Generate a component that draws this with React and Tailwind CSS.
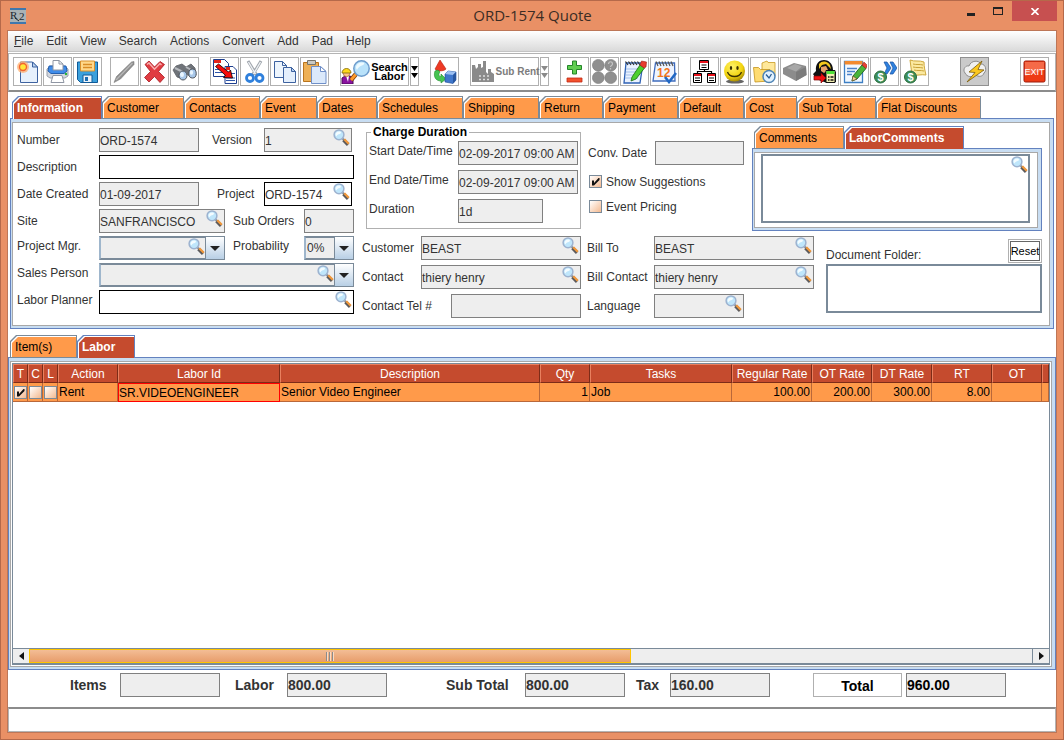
import React, { useState } from "react";
import clsx from "clsx";

/* ---------- Icons ---------- */

const Glass = ({ className }) => (
  <svg viewBox="0 0 17 17" className={clsx("h-[17px] w-[17px]", className)} aria-hidden="true">
    <path d="M9 9l3 3" stroke="#8a8f99" strokeWidth="2" />
    <path d="M10.500 11l4.600 4.800" stroke="#5b5a5c" strokeWidth="3.400" />
    <path d="M11.300 10.300l4.500 4.500" stroke="#f2993c" strokeWidth="2.200" />
    <circle cx="6" cy="5.800" r="4.900" fill="#bfe6fb" stroke="#9db2cf" strokeWidth="1.500" />
    <path d="M2.500 6a3.500 3.500 0 013.500-3.500c1.500 0 2 .5 2 1.500S4 5 3.500 7.500z" fill="#f4fcff" />
  </svg>
);

const Icon = ({ children, w = 25 }) => (
  <svg viewBox={`0 0 ${w} 25`} width={w} height="25" className="shrink-0" aria-hidden="true">
    {children}
  </svg>
);

const NewIcon = () => (
  <Icon>
    <path d="M5.500 3h12l5 5v15.500h-17z" fill="#e6f0fc" stroke="#3d62a0" />
    <path d="M17.500 3v5h5z" fill="#b9d2f0" stroke="#3d62a0" />
    <circle cx="8" cy="8" r="6" fill="#ffb070" opacity=".75" />
    <circle cx="8" cy="8" r="4.200" fill="#f4662e" />
    <circle cx="8" cy="8" r="2.800" fill="#ffe63c" />
  </Icon>
);

const PrintIcon = () => (
  <Icon>
    <path d="M2 10l3-3h15l3 3v7l-3 2H5l-3-2z" fill="#d2d6de" stroke="#9aa1ad" />
    <path d="M4 7h17l1 5-3 2.500H6L3 12z" fill="#3f8cea" stroke="#245fae" />
    <path d="M8 1.500h6l4 3.500v6H8z" fill="#fff" stroke="#8f96a3" />
    <path d="M14 1.500V5h4" fill="none" stroke="#8f96a3" />
    <path d="M8 16.500h9l2 7H6z" fill="#fff" stroke="#8f96a3" />
    <circle cx="21" cy="15" r="1.200" fill="#28b535" />
  </Icon>
);

const SaveIcon = () => (
  <Icon>
    <path d="M2.500 3h20v20.500h-17l-3-3z" fill="#3ba0dc" stroke="#0f5a98" />
    <path d="M5.500 2h14v10h-14z" fill="#ffd88a" stroke="#d7902d" />
    <path d="M8 5.500h9M8 8.500h9" stroke="#d98c25" strokeWidth="1.400" />
    <path d="M8 16h9v7.500H8z" fill="#eef4fa" stroke="#0f5a98" />
    <path d="M10 18h3v4h-3z" fill="#1d6db2" />
  </Icon>
);

const PenIcon = () => (
  <Icon>
    <path d="M2 23.500l2.500-6L19.500 3l2.500-.5v3L8.500 20z" fill="#8d8d8d" stroke="#808080" strokeWidth=".6" />
    <path d="M4 21L20.500 4" stroke="#b8b8b8" strokeWidth="1.300" />
  </Icon>
);

const DeleteIcon = () => (
  <Icon>
    <path d="M3 5.500l4-3.500 5.500 6L18 2.500l4.500 3-6 7 6 6-4.500 5-5.500-6L7 23l-4.500-4.500 6-6z" fill="#e03c42" stroke="#a81820" strokeWidth=".8" />
    <path d="M5 5.500L7 4l5.500 6.200L18 4.500l1.500 1.500" fill="none" stroke="#f9b0b0" strokeWidth="1.500" />
  </Icon>
);

const BinocularIcon = () => (
  <Icon>
    <path d="M1 11l3-4 6-2 4 3 5-3 4 4 1 7-5 2-6-4-2 6-6-2z" fill="#6f7379" stroke="#5d6167" strokeWidth=".8" />
    <path d="M3 9l8 4M14 8l7 4" stroke="#b7babf" strokeWidth="2" />
    <ellipse cx="11" cy="16.500" rx="4" ry="4.500" fill="#a9c8ea" stroke="#51565d" />
    <ellipse cx="20.500" cy="14.500" rx="3.700" ry="4.500" fill="#a9c8ea" stroke="#51565d" />
    <ellipse cx="10" cy="15.500" rx="2" ry="2.500" fill="#eaf6ff" />
    <ellipse cx="19.500" cy="13.500" rx="1.600" ry="2.300" fill="#eaf6ff" />
  </Icon>
);

const ConvertDocIcon = () => (
  <Icon>
    <path d="M1.500.500h11l4 4v13h-15z" fill="#fff" stroke="#1e3f8f" />
    <path d="M2 1h7v3H2z" fill="#e3261b" />
    <path d="M13 7.500h8l3.500 3.500v13.500H13z" fill="#fff" stroke="#1e3f8f" />
    <path d="M14 8h4v3h-4z" fill="#e3261b" />
    <path d="M3 13.500h8M3 10.500h4M14 21.500h9M14 19h9M19 14.500h4" stroke="#2f57ab" />
    <path d="M3.500 7.500l3-2.500 10 8 2-2 2 8-9-.5 2-2.200z" fill="#f50b0b" stroke="#000" strokeWidth=".8" />
  </Icon>
);

const CutIcon = () => (
  <Icon>
    <path d="M6 2l8.500 14M19 2l-8.500 14" stroke="#9da3aa" strokeWidth="3" />
    <path d="M6.500 3L13.500 15M18.500 3L11.500 15" stroke="#eef1f4" strokeWidth="1.400" />
    <circle cx="8" cy="19" r="3.500" fill="none" stroke="#2f80dc" strokeWidth="2.800" />
    <circle cx="17.500" cy="19" r="3.500" fill="none" stroke="#2f80dc" strokeWidth="2.800" />
  </Icon>
);

const CopyIcon = () => (
  <Icon>
    <path d="M2.500 2.500h8l4 4v12h-12z" fill="#edf5fd" stroke="#3d62a0" />
    <path d="M10.500 2.500v4h4" fill="none" stroke="#3d62a0" />
    <path d="M11.500 8.500h8l4 4v11h-12z" fill="#e4effc" stroke="#3d62a0" />
    <path d="M19.500 8.500v4h4z" fill="#b9d2f0" stroke="#3d62a0" />
  </Icon>
);

const PasteIcon = () => (
  <Icon>
    <path d="M1.500 3.500h15v19h-15z" fill="#eeb055" stroke="#b9741d" />
    <path d="M5.500 1.500h8v4h-8z" fill="#c9c9c3" stroke="#77746a" />
    <path d="M9.500 7.500h9l5.500 5v12H9.500z" fill="#dbe9fb" stroke="#6f8fc8" />
    <path d="M18.500 7.500v5H24z" fill="#fff" stroke="#6f8fc8" />
  </Icon>
);

const LaborIcon = () => (
  <Icon w={30}>
    <path d="M1 25v-6l3-2h5l3 2v6z" fill="#8a12a0" stroke="#4b0a59" />
    <path d="M5 17h3l-1 6z" fill="#fff" />
    <circle cx="5.500" cy="14.500" r="3.200" fill="#ffc58a" stroke="#8a5220" strokeWidth=".6" />
    <path d="M1 14a4.500 4.500 0 019 0z" fill="#ffd91a" stroke="#7d6200" strokeWidth=".8" />
    <path d="M15 15l-5 6" stroke="#7a4012" strokeWidth="4.500" />
    <path d="M15 15l-5 6" stroke="#ff9a2a" strokeWidth="2.800" />
    <circle cx="20.500" cy="9.500" r="7.700" fill="#b9e2fa" stroke="#6d9ccc" strokeWidth="1.500" />
    <path d="M15 9c0-4 3-5.500 6-5.500s3 2 0 3S17 9 16 11z" fill="#eefaff" />
  </Icon>
);

const ShapesIcon = () => (
  <Icon>
    <path d="M8 1L3 10c1 2.500 9 2.500 11 0z" fill="#ee3a24" stroke="#b32013" strokeWidth=".6" />
    <path d="M3 12c-2 6 1 10 6 10v2l5-4-5-5v2.500c-2 0-3-2-1-4.500l-2-2z" fill="#46c451" stroke="#1f8c2b" strokeWidth=".6" />
    <path d="M13 15l3-3 8 1v8l-3 3.500-8-1.500z" fill="#3f77cc" stroke="#1c4a96" strokeWidth=".6" />
    <path d="M13 15l3-3 8 1-3 3z" fill="#9cc0f2" />
    <path d="M21 16l3-3v8l-3 3.500z" fill="#27569f" />
  </Icon>
);

const FactoryIcon = () => (
  <Icon w={26}>
    <path d="M2 23V6h3l1 4 2-2V5h3v4l2-1V2h3v11l2 2v-5h3v3l3 2v8z" fill="#8a8a8a" />
    <path d="M9 17h2m2 0h2m2 0h2M9 20.500h2m2 0h2m2 0h2" stroke="#ddd" strokeWidth="1.500" />
  </Icon>
);

const PlusMinusIcon = () => (
  <Icon>
    <path d="M10.500 2h4v4.500h5v4h-5V15h-4v-4.500h-5v-4h5z" fill="#5fce50" stroke="#24852a" />
    <path d="M5 19h15v4H5z" fill="#f2502c" stroke="#c02a14" strokeWidth=".8" />
  </Icon>
);

const DotsIcon = () => (
  <Icon>
    <g fill="#8f8f8f" stroke="#7b7b7b" strokeWidth=".6">
      <circle cx="6.300" cy="6.300" r="5.900" />
      <circle cx="18.700" cy="6.300" r="5.900" />
      <circle cx="6.300" cy="18.700" r="5.900" />
      <circle cx="18.700" cy="18.700" r="5.900" />
    </g>
    <path d="M16.500 5c0-3 4-3 4 0 0 1.500-2 1.500-2 3M18.500 9v1.500" fill="none" stroke="#c5c5c5" strokeWidth="1.200" />
  </Icon>
);

const NotepadIcon = () => (
  <Icon>
    <path d="M4 4h17l-3 20H2z" fill="#eaf2ff" stroke="#2f62b5" strokeWidth="1.300" />
    <path d="M4 10h13M4 13h12M4 16h12M3 19h13" stroke="#a3bfe8" />
    <path d="M6 6L3.500 2.500M9 6L6.500 2.500M12 6L9.500 2.500M15 6l-2.500-3.500M18 6l-2.500-3.500" stroke="#333" strokeWidth="1.200" />
    <path d="M10 18l8-12 4.500 3L14 20l-5 2z" fill="#4dd02f" stroke="#1b6b12" strokeWidth=".8" />
    <path d="M18 6l1.500-4 5 1-.5 5-2 1z" fill="#e83b2e" stroke="#9b1d14" strokeWidth=".6" />
  </Icon>
);

const CalendarIcon = () => (
  <Icon>
    <path d="M3.500 4h19l.5 18H1z" fill="#eef4ff" stroke="#3f6cbd" strokeWidth="1.300" />
    <path d="M6 7L4 2.500M9 7L7 2.500M12 7l-2-4.500M15 7l-2-4.500M18 7l-2-4.500M21 7l-2-4.500" stroke="#555" strokeWidth="1.200" />
    <text x="5" y="18" fontSize="12" fontWeight="bold" fontFamily="Liberation Sans, sans-serif" fill="#f4761b">12</text>
    <path d="M13 18l4 5 7-9" fill="none" stroke="#2268c4" strokeWidth="2.600" />
  </Icon>
);

const TreeIcon = () => (
  <Icon>
    <path d="M12.500 10v3M5.500 14.500V12.500h14v2" fill="none" stroke="#000" strokeWidth="1.200" />
    <g fill="#fff" stroke="#000">
      <path d="M7.500 1.500h9v9h-9zM1.500 14.500h8v9h-8zM15.500 14.500h8v9h-8z" />
    </g>
    <path d="M8 3h8M2 16h7M16 16h7" stroke="#e8111a" strokeWidth="2" />
    <path d="M9.500 6h5M9.500 8.500h5M3 19h5M3 21.500h5M17 19h5M17 21.500h5" stroke="#000" />
  </Icon>
);

const SmileyIcon = () => (
  <Icon>
    <defs>
      <radialGradient id="smiley" cx=".4" cy=".3" r=".8">
        <stop offset="0" stopColor="#fff36a" />
        <stop offset=".6" stopColor="#f2d40f" />
        <stop offset="1" stopColor="#8a7000" />
      </radialGradient>
    </defs>
    <ellipse cx="13" cy="22.500" rx="9" ry="2" fill="#666" />
    <circle cx="12.500" cy="12" r="10.500" fill="url(#smiley)" />
    <ellipse cx="9" cy="9" rx="1.200" ry="2" fill="#3a3000" />
    <ellipse cx="15.500" cy="9" rx="1.200" ry="2" fill="#3a3000" />
    <path d="M5.500 13c2 6 12 6 14 0" fill="none" stroke="#3a3000" strokeWidth="1.300" />
  </Icon>
);

const FolderClockIcon = () => (
  <Icon>
    <path d="M10 4l5-2 1 1.500h7V17H10z" fill="#ffe89a" stroke="#c99a22" strokeWidth=".8" />
    <path d="M1.500 8.500h5l2 2H18V22L3 23z" fill="#ffdc71" stroke="#c4931c" strokeWidth=".8" />
    <circle cx="17" cy="17.500" r="6" fill="#e2f1fd" stroke="#4e84b5" strokeWidth="1.500" />
    <path d="M14 15.500l3 3.500 2.500-4" fill="none" stroke="#2a5d92" strokeWidth="1.300" />
  </Icon>
);

const BrickIcon = () => (
  <Icon>
    <path d="M1 9l11-5 12 3 .5 9L14 22 1 15z" fill="#8c8c8c" />
    <path d="M5 9l8-4 7 2.500-6 5z" fill="#a8a8a8" />
    <path d="M14 13l10-5 .5 8L14 22z" fill="#7b7b7b" />
  </Icon>
);

const TransferIcon = () => (
  <Icon>
    <path d="M4 12C3 4 8 1 12 1s9 3 9 10l3 2v10l-9 1-11-4-3-5z" fill="#111" />
    <path d="M7 5c3-4 9-3 11 1l1 4-5-5-4 1-3 4z" fill="#f3c71c" />
    <path d="M9 8l5-1 2 4-4 3-3-2z" fill="#e9a26a" />
    <path d="M14 11.500h9v12h-9z" fill="#f4efb1" stroke="#111" />
    <path d="M14.500 12h8v3h-8z" fill="#4fe03a" />
    <path d="M16 18h1.500m1 0h3M16 21h1.500m1 0h3" stroke="#111" strokeWidth="1.400" />
    <path d="M2 17h7v-3l5 5-5 5v-3H2z" fill="#f01212" stroke="#7d0505" strokeWidth=".7" />
  </Icon>
);

const EditDocIcon = () => (
  <Icon>
    <path d="M2.500 2.500h18v21h-18z" fill="#f2f8ff" stroke="#3d7fc4" strokeWidth="1.300" />
    <path d="M2.500 2h18v3.500h-18z" fill="#f18a2f" />
    <path d="M5 9.500h10M5 12.500h8M5 15.500h5" stroke="#4b82c9" strokeWidth="1.300" />
    <path d="M11 17l9-11 4 3.500L15 20l-5 2z" fill="#49b53a" stroke="#17561a" strokeWidth=".8" />
    <path d="M20 6l2-3 3.500 3.500L24 9.500z" fill="#e54135" stroke="#8f1c14" strokeWidth=".5" />
    <path d="M11 17l4 3-5 2z" fill="#f5d5a0" stroke="#5b3d12" strokeWidth=".6" />
  </Icon>
);

const Coin = ({ cx, cy }) => (
  <g>
    <circle cx={cx} cy={cy} r="6" fill="#3f8f58" stroke="#256a3c" />
    <text x={cx} y={cy + 4} textAnchor="middle" fontSize="11" fontWeight="bold" fontFamily="Liberation Sans, sans-serif" fill="#fff">$</text>
  </g>
);

const MoneyForwardIcon = () => (
  <Icon>
    <path d="M12 3h3l4 6-4 6h-3l3-6zM18 3h3l4 6-4 6h-3l3-6z" fill="#2f82e0" stroke="#164f9e" strokeWidth=".7" />
    <Coin cx={8.5} cy={18} />
  </Icon>
);

const MoneyNoteIcon = () => (
  <Icon>
    <path d="M8 1c5 2 9 0 14 2 0 5 1 9 2 13-5-1-9 1-14 0z" fill="#fbe9a0" stroke="#cfa83b" />
    <path d="M11 5c4 1 6 0 10 1M11 8c4 1 6 0 10 1M12 11c4 1 6 0 10 1" fill="none" stroke="#c9a238" />
    <Coin cx={8.5} cy={18} />
  </Icon>
);

const BoltIcon = () => (
  <Icon>
    <path d="M3 14c-3-4 1-8 4-7 2-6 10-6 12-2 5 0 6 7 3 9-1 4-6 4-8 2-4 3-9 2-11-2z" fill="#f0f0f0" stroke="#8c8c8c" />
    <path d="M20 2L7 13l6 .5-8 9.500L22 11l-6-.5z" fill="#fbc81e" stroke="#7a5a0d" strokeWidth=".8" />
  </Icon>
);

const ExitIcon = () => (
  <Icon>
    <rect x="2" y="2" width="21" height="21" rx="1.500" fill="#ee3a14" stroke="#9c1d0d" />
    <path d="M3 3h19v8L3 17z" fill="#f56a48" />
    <text x="12.500" y="16" textAnchor="middle" fontSize="9" fontFamily="Liberation Sans, sans-serif" fill="#fff">EXIT</text>
  </Icon>
);

const LogoIcon = () => (
  <svg viewBox="0 0 16 16" className="h-4 w-4" aria-hidden="true">
    <path d="M0 0h16v16H0z" fill="#a9b2b5" />
    <path d="M0 1h16M0 15h16" stroke="#3f77ad" strokeWidth="2" />
    <text x="0" y="11" fontSize="11" fontFamily="Liberation Serif, serif" fill="#1c2730">R</text>
    <path d="M5 10l4 3" stroke="#1c2730" />
    <text x="9" y="12" fontSize="11" fontFamily="Liberation Serif, serif" fill="#1c2730">2</text>
  </svg>
);

/* ---------- Toolbar ---------- */

const ToolButton = ({ label, children, wide, pressed }) => (
  <button
    type="button"
    aria-label={label}
    className={clsx(
      "flex h-[29px] items-center justify-center border",
      wide ? "w-[69px]" : "w-[29px]",
      pressed ? "border-[#909090] bg-[#cacaca]" : "border-[#b0b0b0] bg-white"
    )}
  >
    {children}
  </button>
);

const DropButton = ({ label, muted }) => (
  <button
    type="button"
    aria-label={label}
    className="flex h-[29px] w-[9px] items-center justify-center border border-[#b0b0b0]"
  >
    <svg viewBox="0 0 7 13" className="h-[13px] w-[7px] shrink-0" fill={muted ? "#8a8a8a" : "#000"} aria-hidden="true">
      <path d="M0 1h7L3.500 6zM0 8h7l-3.500 5z" />
    </svg>
  </button>
);

const ToolGroup = ({ children, className }) => <div className={clsx("flex gap-px", className)}>{children}</div>;

const Toolbar = () => (
  <div className="mt-px flex h-[39px] items-start gap-[11px] border border-b-2 border-[#b4b4b4] border-b-[#8c8c8c] pt-[3px] pl-1">
    <ToolGroup>
      <ToolButton label="New"><NewIcon /></ToolButton>
      <ToolButton label="Print"><PrintIcon /></ToolButton>
      <ToolButton label="Save"><SaveIcon /></ToolButton>
    </ToolGroup>
    <ToolGroup className="-ml-[3px]">
      <ToolButton label="Edit"><PenIcon /></ToolButton>
      <ToolButton label="Delete"><DeleteIcon /></ToolButton>
      <ToolButton label="Find"><BinocularIcon /></ToolButton>
    </ToolGroup>
    <ToolGroup>
      <ToolButton label="Convert"><ConvertDocIcon /></ToolButton>
      <ToolButton label="Cut"><CutIcon /></ToolButton>
      <ToolButton label="Copy"><CopyIcon /></ToolButton>
      <ToolButton label="Paste"><PasteIcon /></ToolButton>
    </ToolGroup>
    <ToolGroup>
      <ToolButton label="Search Labor" wide>
        <LaborIcon />
        <span className="text-center text-[11px] leading-[9px] font-bold text-black">Search Labor</span>
      </ToolButton>
      <DropButton label="Labor options" />
    </ToolGroup>
    <ToolButton label="Substitute"><ShapesIcon /></ToolButton>
    <ToolGroup>
      <ToolButton label="Sub Rent" wide>
        <FactoryIcon />
        <span className="text-[10px] leading-none font-bold whitespace-nowrap text-[#7c7c7c]">Sub Rent</span>
      </ToolButton>
      <DropButton label="Sub rent options" muted />
    </ToolGroup>
    <ToolGroup>
      <ToolButton label="Add or remove"><PlusMinusIcon /></ToolButton>
      <ToolButton label="Availability"><DotsIcon /></ToolButton>
      <ToolButton label="Notes"><NotepadIcon /></ToolButton>
      <ToolButton label="Calendar"><CalendarIcon /></ToolButton>
    </ToolGroup>
    <ToolGroup>
      <ToolButton label="Hierarchy"><TreeIcon /></ToolButton>
      <ToolButton label="Crew"><SmileyIcon /></ToolButton>
      <ToolButton label="History"><FolderClockIcon /></ToolButton>
      <ToolButton label="Package"><BrickIcon /></ToolButton>
      <ToolButton label="Transfer"><TransferIcon /></ToolButton>
      <ToolButton label="Edit document"><EditDocIcon /></ToolButton>
      <ToolButton label="Send payment"><MoneyForwardIcon /></ToolButton>
      <ToolButton label="Invoice"><MoneyNoteIcon /></ToolButton>
    </ToolGroup>
    <ToolGroup className="ml-5">
      <ToolButton label="Quick action" pressed><BoltIcon /></ToolButton>
    </ToolGroup>
    <ToolGroup className="ml-5">
      <ToolButton label="Exit"><ExitIcon /></ToolButton>
    </ToolGroup>
  </div>
);

/* ---------- Tabs and panels ---------- */

const CUT = "[clip-path:polygon(6px_0,100%_0,100%_100%,0_100%,0_6px)]";

const Tab = ({ label, width, active, onClick }) => (
  <button
    type="button"
    role="tab"
    aria-selected={active}
    onClick={onClick}
    className={clsx(
      "h-[23px] shrink-0 pt-px pr-px pl-px text-left",
      CUT,
      width,
      active ? "relative z-10 bg-[#6382bf] font-bold text-white" : "bg-[#7a8a99] pb-px text-black"
    )}
  >
    <span className={clsx("block h-full bg-white pt-px pl-px", CUT)}>
      <span
        className={clsx(
          "block h-full leading-[20px] whitespace-nowrap",
          CUT,
          active ? "bg-[#c54b2e] pl-[3px]" : "bg-[#ff9a4a] pl-[3px]"
        )}
      >
        {label}
      </span>
    </span>
  </button>
);

const TabStrip = ({ tabs, initial, className }) => {
  const [current, setCurrent] = useState(initial);
  return (
    <div role="tablist" className={clsx("-mb-px flex", className)}>
      {tabs.map(([label, width]) => (
        <Tab
          key={label}
          label={label}
          width={width}
          active={label === current}
          onClick={() => setCurrent(label)}
        />
      ))}
    </div>
  );
};

const Panel = ({ children, className, inner }) => (
  <div className={clsx("flex flex-col border border-[#6382bf] bg-[#c8ddf2] pt-[3px] pr-[3px] pb-[2px] pl-px", className)}>
    <div className={clsx("flex-1 border border-[#a8a8a8] bg-white", inner)}>{children}</div>
  </div>
);

/* ---------- Form controls ---------- */

const Field = ({ id, label, lw, fw, value = "", search, editable, raised }) => (
  <div className={clsx("flex h-6", raised ? "items-start" : "items-center")}>
    <label htmlFor={id} className={clsx("shrink-0 leading-5 whitespace-nowrap", lw)}>{label}</label>
    <div className={clsx("relative h-6", fw)}>
      <input
        id={id}
        type="text"
        defaultValue={value}
        readOnly={!editable}
        className={clsx(
          "h-full w-full border pt-px text-xs outline-none",
          editable ? "border-black bg-white" : "border-[#808080] bg-[#eee]"
        )}
      />
      {search && (
        <button type="button" aria-label={`Look up ${label}`} className="absolute top-px right-[2px]">
          <Glass />
        </button>
      )}
    </div>
  </div>
);

const Combo = ({ id, label, lw, fw, value = "", search }) => (
  <div className="flex h-6">
    <label htmlFor={id} className={clsx("shrink-0 leading-5 whitespace-nowrap", lw)}>{label}</label>
    <div className={clsx("relative h-6", fw)}>
      <select
        id={id}
        defaultValue={value}
        className="h-full w-full appearance-none border-2 border-t-[#7a8a99] border-r-[#7a8a99] border-b-[#7a8a99] border-l-[#9fb6cc] bg-[#eee] pl-px text-xs outline-none"
      >
        <option>{value}</option>
      </select>
      {search && <Glass className="pointer-events-none absolute top-[2px] right-[20px]" />}
      <span className="pointer-events-none absolute top-px right-px flex h-[22px] w-[19px] items-center justify-center border-l border-[#7a8a99] bg-linear-to-b from-white to-[#b8cfe5]">
        <svg viewBox="0 0 10 5" className="h-[5px] w-[10px]" fill="#222" aria-hidden="true">
          <path d="M0 0h10L5 5z" />
        </svg>
      </span>
    </div>
  </div>
);

const Tick = ({ id, label, checked, children }) => (
  <span className="relative flex items-center gap-1">
    <input
      id={id}
      type="checkbox"
      aria-label={label}
      defaultChecked={checked}
      className="peer h-[13px] w-[13px] shrink-0 appearance-none border border-[#7a8a99] bg-linear-to-br from-white to-[#f3b98f]"
    />
    <svg viewBox="0 0 13 13" className="pointer-events-none absolute left-0 hidden h-[13px] w-[13px] peer-checked:block" aria-hidden="true">
      <path d="M3 5.500h2V8l4.500-5h1v2L5 10.500H3z" fill="#111" />
    </svg>
    {children}
  </span>
);

const InformationForm = () => (
  <div className="flex gap-2 pr-[7px] pb-[7px] pl-1">
    <div className="flex w-[337px] shrink-0 flex-col gap-[3px] pt-[5px]">
      <div className="flex">
        <Field id="number" label="Number" lw="w-[82px]" fw="w-[100px]" value="ORD-1574" />
        <Field id="version" label="Version" lw="w-[65px] pl-[13px]" fw="w-[88px]" value="1" search />
      </div>
      <Field id="description" label="Description" lw="w-[82px]" fw="flex-1" editable />
      <div className="flex">
        <Field id="created" label="Date Created" lw="w-[82px]" fw="w-[100px]" value="01-09-2017" />
        <Field id="project" label="Project" lw="w-[65px] pl-[18px]" fw="w-[88px]" value="ORD-1574" search editable />
      </div>
      <div className="flex">
        <Field id="site" label="Site" lw="w-[82px]" fw="w-[126px]" value="SANFRANCISCO" search />
        <Field id="suborders" label="Sub Orders" lw="w-[79px] pl-2" fw="w-[50px]" value="0" />
      </div>
      <div className="flex">
        <Combo id="manager" label="Project Mgr." lw="w-[82px]" fw="w-[126px]" search />
        <Combo id="probability" label="Probability" lw="w-[79px] pl-2" fw="w-[50px]" value="0%" />
      </div>
      <Combo id="sales" label="Sales Person" lw="w-[82px]" fw="flex-1" search />
      <Field id="planner" label="Labor Planner" lw="w-[82px]" fw="flex-1" search editable raised />
    </div>

    <div className="flex min-w-0 flex-1 flex-col gap-[5px] pt-[3px]">
      <div className="flex items-start">
        <fieldset className="ml-1 flex w-[215px] shrink-0 flex-col gap-[5px] border border-[#b0b0b0] px-[2px] pt-[3px] pb-[5px]">
          <legend className="ml-[2px] px-[2px] leading-[12px] font-bold text-black">Charge Duration</legend>
          <Field id="start" label="Start Date/Time" lw="w-[89px]" fw="w-[120px]" value="02-09-2017 09:00 AM" raised />
          <Field id="end" label="End Date/Time" lw="w-[89px]" fw="w-[120px]" value="02-09-2017 09:00 AM" raised />
          <Field id="duration" label="Duration" lw="w-[89px]" fw="w-[85px]" value="1d" raised />
        </fieldset>
        <div className="ml-[7px] w-[156px] shrink-0 pt-[15px]">
          <Field id="conv" label="Conv. Date" lw="w-[67px]" fw="w-[89px]" />
          <div className="mt-1 flex h-[25px] items-center pl-px">
            <Tick id="suggest" checked>
              <label htmlFor="suggest">Show Suggestions</label>
            </Tick>
          </div>
          <div className="flex h-[25px] items-center pl-px">
            <Tick id="pricing">
              <label htmlFor="pricing">Event Pricing</label>
            </Tick>
          </div>
        </div>
        <div className="ml-2 min-w-0 flex-1">
          <TabStrip
            className="pl-[2px]"
            initial="LaborComments"
            tabs={[
              ["Comments", "w-[90px]"],
              ["LaborComments", "w-[120px]"],
            ]}
          />
          <Panel className="h-[83px]" inner="relative flex pt-px pr-[7px] pb-1 pl-[6px]">
            <textarea
              aria-label="Labor comments"
              className="block w-full flex-1 resize-none border-2 border-[#7a8a99] outline-none"
            />
            <button type="button" aria-label="Expand comments" className="absolute top-[3px] right-[9px]">
              <Glass />
            </button>
          </Panel>
        </div>
      </div>

      <div className="flex">
        <div className="flex w-[219px] shrink-0 flex-col gap-[5px]">
          <Field id="customer" label="Customer" lw="w-[59px]" fw="flex-1" value="BEAST" search />
          <Field id="contact" label="Contact" lw="w-[59px]" fw="flex-1" value="thiery henry" search />
          <Field id="tel" label="Contact Tel #" lw="w-[89px]" fw="flex-1" />
        </div>
        <div className="ml-[6px] flex w-[227px] shrink-0 flex-col gap-[5px]">
          <Field id="billto" label="Bill To" lw="w-[67px]" fw="flex-1" value="BEAST" search />
          <Field id="billcontact" label="Bill Contact" lw="w-[67px]" fw="flex-1" value="thiery henry" search />
          <Field id="language" label="Language" lw="w-[67px]" fw="w-[90px]" search />
        </div>
        <div className="ml-3 min-w-0 flex-1 pt-[3px]">
          <div className="mb-px flex items-end justify-between">
            <label htmlFor="folder">Document Folder:</label>
            <button
              type="button"
              className="h-6 w-[34px] border border-[#b0b0b0] bg-white p-px text-[11px] text-black"
            >
              <span className="flex h-full items-center justify-center border border-[#666]">Reset</span>
            </button>
          </div>
          <textarea id="folder" className="block h-[49px] w-full resize-none border-2 border-[#7a8a99] outline-none" />
        </div>
      </div>
    </div>
  </div>
);

/* ---------- Labor table ---------- */

const COLUMNS = [
  ["T", "w-[15px]"],
  ["C", "w-[15px]"],
  ["L", "w-[15px]"],
  ["Action", "w-[60px]"],
  ["Labor Id", "w-[162px]"],
  ["Description", "w-[260px]"],
  ["Qty", "w-[50px]"],
  ["Tasks", "w-[142px]"],
  ["Regular Rate", "w-[80px]"],
  ["OT Rate", "w-[60px]"],
  ["DT Rate", "w-[60px]"],
  ["RT", "w-[60px]"],
  ["OT", "w-[50px]"],
  ["", ""],
];

const Cell = ({ children, right, selected }) => (
  <td
    className={clsx(
      "whitespace-nowrap",
      selected ? "border border-[#ff0000]" : "border-r border-b border-[#b9683a]",
      right ? "pr-px text-right" : !selected && "pl-px"
    )}
  >
    {children}
  </td>
);

const LaborTable = () => (
  <table className="w-full table-fixed border-separate border-spacing-0 text-black">
    <thead>
      <tr className="h-[19px] bg-[#c54b2e] text-white">
        {COLUMNS.map(([name, width], i) => (
          <th
            key={i}
            className={clsx(
              "border border-t-[#e9805f] border-r-[#7d2c18] border-b-[#7d2c18] border-l-[#e9805f] p-0 font-normal whitespace-nowrap",
              width
            )}
          >
            {name}
          </th>
        ))}
      </tr>
    </thead>
    <tbody>
      <tr className="h-[19px] bg-[#ff9a4a]">
        <Cell><Tick label="T" checked /></Cell>
        <Cell><Tick label="C" /></Cell>
        <Cell><Tick label="L" /></Cell>
        <Cell>Rent</Cell>
        <Cell selected>SR.VIDEOENGINEER</Cell>
        <Cell>Senior Video Engineer</Cell>
        <Cell right>1</Cell>
        <Cell>Job</Cell>
        <Cell right>100.00</Cell>
        <Cell right>200.00</Cell>
        <Cell right>300.00</Cell>
        <Cell right>8.00</Cell>
        <Cell />
        <Cell />
      </tr>
    </tbody>
  </table>
);

const ScrollBar = () => (
  <div className="flex h-[16px] border-y border-[#7a8a99] bg-[#eee]">
    <button type="button" aria-label="Scroll left" className="flex w-[16px] items-center justify-center">
      <svg viewBox="0 0 5 8" className="h-2 w-[5px]" fill="#111" aria-hidden="true"><path d="M5 0v8L0 4z" /></svg>
    </button>
    <div className="flex-1 border-r border-[#7a8a99]">
      <div className="flex h-full w-[60%] items-center justify-center gap-px border border-[#ffc400] bg-linear-to-b from-[#f3bd95] to-[#e79d6b]">
        <span className="h-[9px] w-[2px] border-l border-[#8c8c8c] bg-[#fbdcc4]" />
        <span className="h-[9px] w-[2px] border-l border-[#8c8c8c] bg-[#fbdcc4]" />
        <span className="h-[9px] w-[2px] border-l border-[#8c8c8c] bg-[#fbdcc4]" />
      </div>
    </div>
    <button type="button" aria-label="Scroll right" className="flex w-[16px] items-center justify-center">
      <svg viewBox="0 0 5 8" className="h-2 w-[5px]" fill="#111" aria-hidden="true"><path d="M0 0v8l5-4z" /></svg>
    </button>
  </div>
);

/* ---------- Totals ---------- */

const Total = ({ id, label, value = "", lw, strong }) => (
  <div className="flex items-center">
    <label
      htmlFor={id}
      className={clsx(
        "h-6 leading-6",
        lw,
        strong && "mr-1 w-[89px] border border-[#b0b0b0] text-center text-black"
      )}
    >
      {label}
    </label>
    <input
      id={id}
      readOnly
      value={value}
      className={clsx("h-6 w-[100px] border border-[#808080] bg-[#eee] outline-none", strong && "text-black")}
    />
  </div>
);

const Totals = () => (
  <div className="mt-[3px] flex pl-[62px] text-sm font-bold">
    <Total id="t-items" label="Items" lw="w-[50px]" />
    <div className="ml-[15px]"><Total id="t-labor" label="Labor" lw="w-[52px]" value="800.00" /></div>
    <div className="ml-[59px]"><Total id="t-sub" label="Sub Total" lw="w-[79px]" value="800.00" /></div>
    <div className="ml-[11px]"><Total id="t-tax" label="Tax" lw="w-[34px]" value="160.00" /></div>
    <div className="ml-[43px]"><Total id="t-total" label="Total" value="960.00" strong /></div>
  </div>
);

/* ---------- Window ---------- */

const MENU = ["File", "Edit", "View", "Search", "Actions", "Convert", "Add", "Pad", "Help"];

const MAIN_TABS = [
  ["Information", "w-[90px]"],
  ["Customer", "w-[82px]"],
  ["Contacts", "w-[76px]"],
  ["Event", "w-[57px]"],
  ["Dates", "w-[60px]"],
  ["Schedules", "w-[86px]"],
  ["Shipping", "w-[76px]"],
  ["Return", "w-[64px]"],
  ["Payment", "w-[75px]"],
  ["Default", "w-[66px]"],
  ["Cost", "w-[53px]"],
  ["Sub Total", "w-[79px]"],
  ["Flat Discounts", "w-[105px]"],
];

const TitleBar = () => (
  <header className="grid h-[29px] grid-cols-[1fr_auto_1fr] pl-px">
    <div className="flex items-center pl-[2px]"><LogoIcon /></div>
    <h1 className="font-['Open_Sans',sans-serif] text-[15px] leading-[29px] text-[#3b2c24]">ORD-1574 Quote</h1>
    <div className="flex items-start justify-end">
      <button type="button" aria-label="Minimize" className="flex h-5 w-[26px] items-center justify-center pt-[7px]">
        <span className="h-[3px] w-2 bg-[#222]" />
      </button>
      <button type="button" aria-label="Maximize" className="flex h-5 w-[28px] items-center justify-center">
        <span className="h-2 w-[10px] border border-t-2 border-[#222]" />
      </button>
      <button type="button" aria-label="Close" className="flex h-5 w-[45px] items-center justify-center bg-[#c75050]">
        <svg viewBox="0 0 8 7" className="h-[7px] w-2" aria-hidden="true">
          <path d="M.5 0l7 7M7.500 0l-7 7" stroke="#fff" strokeWidth="1.700" />
        </svg>
      </button>
    </div>
  </header>
);

const App = () => (
  <div className="flex min-h-screen flex-col border border-[#b5694a] bg-[#e99065] px-[6px] pb-[6px] font-['Liberation_Sans',Arial,sans-serif] text-xs text-[#333]">
    <TitleBar />
    <main className="flex flex-1 flex-col border border-[#bd7657] bg-white">
      <nav className="flex h-[21px] items-center gap-[13px] border-b border-[#c4c4c4] bg-linear-to-b from-white to-[#dadada] pl-[6px]">
        {MENU.map((item) => (
          <a key={item} href="#">
            {item === "File" ? <><u>F</u>ile</> : item}
          </a>
        ))}
      </nav>
      <Toolbar />

      <div className="px-[2px] pt-1">
        <TabStrip className="pl-[2px]" initial="Information" tabs={MAIN_TABS} />
        <Panel>
          <InformationForm />
        </Panel>
      </div>

      <div className="mt-[6px] flex flex-1 flex-col">
        <TabStrip
          className="pl-[2px]"
          initial="Labor"
          tabs={[
            ["Item(s)", "w-[67px]"],
            ["Labor", "w-[58px]"],
          ]}
        />
        <Panel className="flex-1" inner="flex flex-col p-px">
          <div className="flex flex-1 flex-col border border-[#7a8a99]">
            <div className="flex-1">
              <LaborTable />
            </div>
            <ScrollBar />
          </div>
        </Panel>
      </div>

      <Totals />
      <footer className="mt-[10px] h-[25px] border border-t-2 border-[#b4b4b4] border-t-[#8c8c8c]" />
    </main>
  </div>
);

export default App;
